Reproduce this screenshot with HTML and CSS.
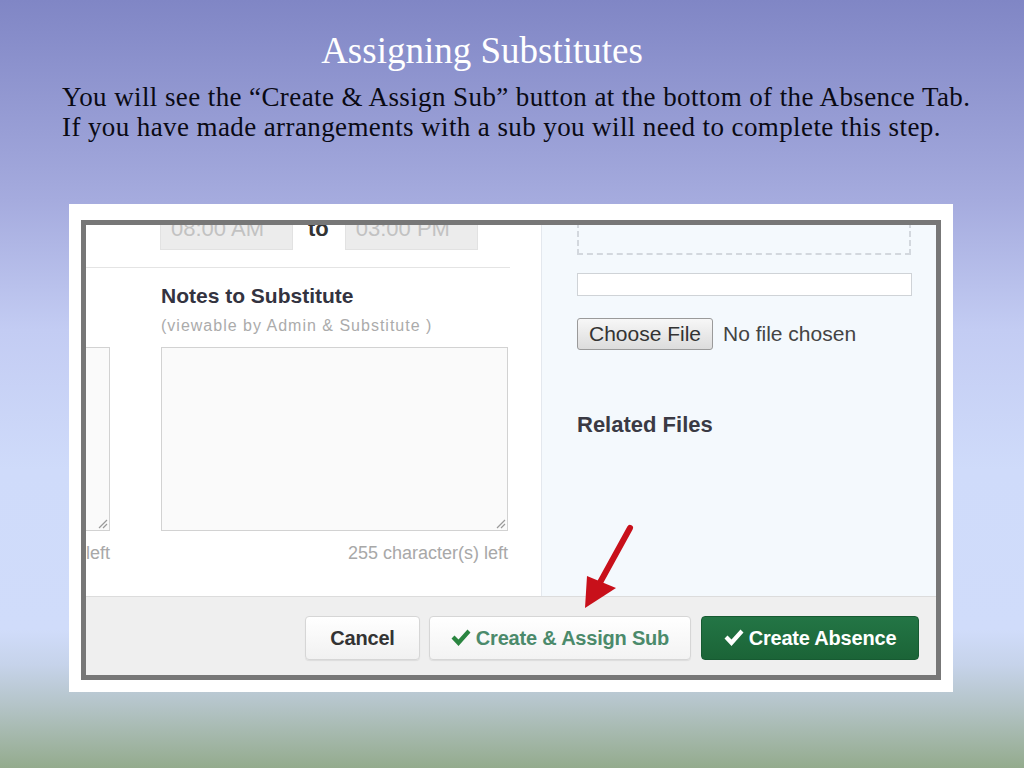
FILE: index.html
```html
<!DOCTYPE html>
<html lang="en">
<head>
<meta charset="utf-8">
<title>Assigning Substitutes</title>
<link rel="stylesheet" href="styles.css">
</head>
<body>
<div class="slide">
  <h1 class="title">Assigning Substitutes</h1>
  <p class="lead">You will see the “Create &amp; Assign Sub” button at the bottom of the Absence Tab.<br>If you have made arrangements with a sub you will need to complete this step.</p>

  <div class="frame">
    <div class="shot">
      <div class="main">
        <div class="left">
          <div class="time-row">
            <div class="time-box">08:00 AM</div>
            <span class="to">to</span>
            <div class="time-box">03:00 PM</div>
          </div>
          <div class="rule"></div>
          <div class="notes">
            <div class="notes-title">Notes to Substitute</div>
            <div class="notes-sub">(viewable by Admin &amp; Substitute )</div>
            <div class="area stub">
              <svg class="grip" viewBox="0 0 12 12" width="12" height="12"><path d="M11 3 L3 11 M11 7 L7 11" stroke="#9a9a9a" stroke-width="1.2"/></svg>
            </div>
            <div class="area big">
              <svg class="grip" viewBox="0 0 12 12" width="12" height="12"><path d="M11 3 L3 11 M11 7 L7 11" stroke="#9a9a9a" stroke-width="1.2"/></svg>
            </div>
            <div class="count stub-count">left</div>
            <div class="count">255 character(s) left</div>
          </div>
        </div>
        <div class="right">
          <div class="drop"></div>
          <div class="text-input"></div>
          <div class="file-row">
            <span class="file-btn">Choose File</span>
            <span class="file-none">No file chosen</span>
          </div>
          <div class="related">Related Files</div>
        </div>
      </div>
      <div class="footer">
        <span class="btn cancel">Cancel</span>
        <span class="btn assign"><svg class="check" viewBox="0 0 20 18" width="20" height="18"><path d="M0.5 9.5 L3.5 6.5 L7.5 10.5 L16.5 0.5 L19.5 3.5 L7.5 17 Z"/></svg>Create &amp; Assign Sub</span>
        <span class="btn absence"><svg class="check" viewBox="0 0 20 18" width="20" height="18"><path d="M0.5 9.5 L3.5 6.5 L7.5 10.5 L16.5 0.5 L19.5 3.5 L7.5 17 Z"/></svg>Create Absence</span>
      </div>
    </div>
  </div>

  <svg class="arrow" viewBox="0 0 70 100" width="70" height="100">
    <path d="M55 8 L22 68" stroke="#c8101a" stroke-width="6" stroke-linecap="round" fill="none"/>
    <path d="M12 56 L41 68 L10 88 Z" fill="#c8101a"/>
  </svg>
</div>
</body>
</html>
```

FILE: styles.css
```css
html, body {
  margin: 0;
  padding: 0;
}

body {
  width: 1024px;
  height: 768px;
  overflow: hidden;
  background: linear-gradient(to bottom,
    #8086c5 0px,
    #a5abde 200px,
    #c3ccf3 330px,
    #cfdbfa 470px,
    #d0dcfa 630px,
    #c6d3ea 665px,
    #b4c4c8 705px,
    #94ab8d 768px);
}

.slide {
  position: relative;
  height: 768px;
  padding-top: 30px;
  box-sizing: border-box;
}

.title {
  margin: 0 0 0 62px;
  width: 840px;
  text-align: center;
  font-family: "Liberation Serif", "Times New Roman", serif;
  font-weight: normal;
  font-size: 37px;
  line-height: 41px;
  color: #ffffff;
}

.lead {
  margin: 11px 0 0 62px;
  font-family: "Liberation Serif", "Times New Roman", serif;
  font-size: 27px;
  letter-spacing: 0.4px;
  line-height: 30px;
  color: #0a0a14;
}

.frame {
  margin: 62px 0 0 69px;
  width: 884px;
  height: 488px;
  box-sizing: border-box;
  padding: 16px 12px 12px 12px;
  background: #ffffff;
}

.shot {
  height: 460px;
  box-sizing: border-box;
  border: 5px solid #777777;
  display: flex;
  flex-direction: column;
  font-family: "Liberation Sans", Arial, sans-serif;
}

.main {
  height: 371px;
  display: flex;
  overflow: hidden;
}

.left {
  width: 456px;
  box-sizing: border-box;
  border-right: 1px solid #e3e8ee;
  background: #ffffff;
  overflow: hidden;
}

.time-row {
  margin-top: -11px;
  padding-left: 74px;
  display: flex;
  align-items: flex-start;
  height: 36px;
}

.time-box {
  width: 133px;
  height: 36px;
  box-sizing: border-box;
  background: #ececec;
  border: 1px solid #e2e2e2;
  padding: 0 0 0 10px;
  font-size: 22px;
  line-height: 28px;
  color: #c2c2c2;
}

.to {
  margin: 1px 16px 0 15px;
  font-size: 22px;
  font-weight: bold;
  line-height: 28px;
  color: #333333;
}

.rule {
  margin-top: 17px;
  width: 424px;
  height: 1px;
  background: #e4e4e4;
}

.notes {
  display: grid;
  grid-template-columns: 24px 347px;
  column-gap: 51px;
}

.notes-title {
  grid-column: 2;
  margin-top: 16px;
  font-size: 21px;
  font-weight: bold;
  line-height: 24px;
  color: #333340;
}

.notes-sub {
  grid-column: 2;
  margin-top: 8px;
  font-size: 16px;
  letter-spacing: 1px;
  line-height: 20px;
  color: #ababab;
}

.area {
  position: relative;
  margin-top: 11px;
  height: 184px;
  box-sizing: border-box;
  border: 1px solid #d2d2d2;
  background: #fafafa;
}

.area.stub {
  grid-column: 1;
  border-left: none;
}

.area.big {
  grid-column: 2;
}

.grip {
  position: absolute;
  right: 1px;
  bottom: 1px;
}

.count {
  grid-column: 2;
  margin-top: 11px;
  text-align: right;
  font-size: 18px;
  line-height: 22px;
  color: #a8a8a8;
}

.count.stub-count {
  grid-column: 1;
}

.right {
  flex: 1;
  background: #f4f9fd;
  padding-left: 35px;
  overflow: hidden;
}

.drop {
  margin-top: -12px;
  width: 334px;
  height: 42px;
  box-sizing: border-box;
  border: 2px dashed #d3d8de;
  border-top: none;
}

.text-input {
  margin-top: 18px;
  width: 335px;
  height: 23px;
  box-sizing: border-box;
  border: 1px solid #cfd3d7;
  background: #ffffff;
}

.file-row {
  margin-top: 22px;
  display: flex;
  align-items: center;
}

.file-btn {
  width: 136px;
  height: 32px;
  box-sizing: border-box;
  border: 1px solid #9a9a9a;
  border-radius: 3px;
  background: linear-gradient(#f7f7f7, #dcdcdc);
  font-size: 21px;
  line-height: 30px;
  text-align: center;
  color: #333333;
}

.file-none {
  margin-left: 10px;
  font-size: 21px;
  color: #444444;
}

.related {
  margin-top: 62px;
  font-size: 22px;
  font-weight: bold;
  line-height: 26px;
  color: #3a3a44;
}

.footer {
  flex: 1;
  box-sizing: border-box;
  border-top: 1px solid #dcdcdc;
  background: #efefef;
  display: flex;
  justify-content: flex-end;
  align-items: flex-start;
  padding: 19px 17px 0 0;
  gap: 9px;
}

.btn {
  height: 44px;
  box-sizing: border-box;
  border-radius: 4px;
  display: flex;
  align-items: center;
  justify-content: center;
  font-size: 20px;
  font-weight: bold;
  letter-spacing: -0.2px;
}

.cancel {
  width: 115px;
  border: 1px solid #d6d6d6;
  background: linear-gradient(#ffffff, #f1f1f1);
  box-shadow: 0 1px 1px rgba(0,0,0,0.08);
  color: #333333;
}

.assign {
  width: 262px;
  border: 1px solid #d6d6d6;
  background: linear-gradient(#ffffff, #f3f3f3);
  box-shadow: 0 1px 1px rgba(0,0,0,0.08);
  color: #4b8a6b;
}

.assign .check {
  fill: #2a8540;
}

.absence {
  width: 218px;
  margin-left: 1px;
  border: 1px solid #175a32;
  background: linear-gradient(#237545, #1b6437);
  color: #ffffff;
}

.absence .check {
  fill: #ffffff;
}

.check {
  margin-right: 5px;
  flex: none;
}

.arrow {
  position: absolute;
  left: 575px;
  top: 520px;
}
```
